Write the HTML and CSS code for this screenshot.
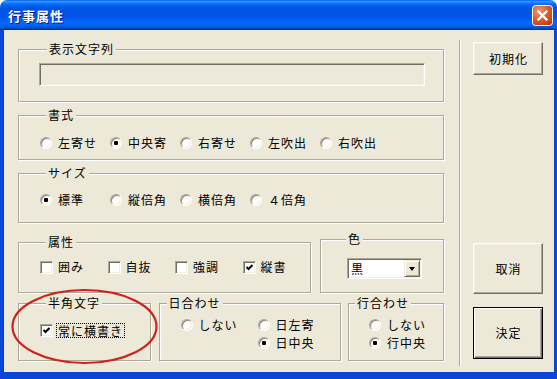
FILE: index.html
```html
<!DOCTYPE html>
<html lang="ja">
<head>
<meta charset="utf-8">
<title>行事属性</title>
<link rel="stylesheet" href="styles.css">
</head>
<body>
<div class="window">
  <div class="titlebar">
    <span class="title">行事属性</span>
    <span class="close">
      <svg width="21" height="21" viewBox="0 0 21 21">
        <defs>
          <radialGradient id="cg" cx="35%" cy="30%" r="80%">
            <stop offset="0" stop-color="#F29A74"/>
            <stop offset="0.55" stop-color="#E15A2C"/>
            <stop offset="1" stop-color="#C23A10"/>
          </radialGradient>
        </defs>
        <rect x="0.5" y="0.5" width="20" height="20" rx="3" fill="url(#cg)" stroke="#fff"/>
        <path d="M6.5 6.5 L14.5 14.5 M14.5 6.5 L6.5 14.5" stroke="#fff" stroke-width="2.2" stroke-linecap="square"/>
      </svg>
    </span>
  </div>
  <div class="client">
    <div class="left">
      <div class="group g1">
        <div class="legend l1">表示文字列</div>
        <div class="textbox"></div>
      </div>
      <div class="group g2">
        <div class="legend">書式</div>
        <div class="opts">
          <div class="opt"><span class="radio"></span>左寄せ</div>
          <div class="opt"><span class="radio on"></span>中央寄</div>
          <div class="opt"><span class="radio"></span>右寄せ</div>
          <div class="opt"><span class="radio"></span>左吹出</div>
          <div class="opt"><span class="radio"></span>右吹出</div>
        </div>
      </div>
      <div class="group g3">
        <div class="legend">サイズ</div>
        <div class="opts">
          <div class="opt"><span class="radio on"></span>標準</div>
          <div class="opt"><span class="radio"></span>縦倍角</div>
          <div class="opt"><span class="radio"></span>横倍角</div>
          <div class="opt"><span class="radio"></span>４倍角</div>
        </div>
      </div>
      <div class="row r4">
        <div class="group g4">
          <div class="legend">属性</div>
          <div class="opts">
            <div class="opt"><span class="check"></span>囲み</div>
            <div class="opt"><span class="check"></span>自抜</div>
            <div class="opt"><span class="check"></span>強調</div>
            <div class="opt"><span class="check"><svg width="11" height="11" viewBox="0 0 11 11"><polyline points="2.5,5 4.5,7 8.5,3" fill="none" stroke="#000" stroke-width="2"/></svg></span>縦書</div>
          </div>
        </div>
        <div class="group g5">
          <div class="legend l5">色</div>
          <div class="combo">
            <span class="combo-text">黒</span>
            <span class="combo-btn"><span class="arrow"></span></span>
          </div>
        </div>
      </div>
      <div class="row r5">
        <div class="group g6">
          <div class="legend">半角文字</div>
          <div class="single">
            <span class="check c6"><svg width="11" height="11" viewBox="0 0 11 11"><polyline points="2.5,5 4.5,7 8.5,3" fill="none" stroke="#000" stroke-width="2"/></svg></span>
            <span class="focus">常に横書き</span>
          </div>
        </div>
        <div class="group g7">
          <div class="legend l7">日合わせ</div>
          <div class="grid">
            <div class="opt"><span class="radio"></span>しない</div>
            <div class="opt"><span class="radio"></span>日左寄</div>
            <div class="opt"></div>
            <div class="opt"><span class="radio on"></span>日中央</div>
          </div>
        </div>
        <div class="group g8">
          <div class="legend l8">行合わせ</div>
          <div class="grid one">
            <div class="opt"><span class="radio"></span>しない</div>
            <div class="opt"><span class="radio on"></span>行中央</div>
          </div>
        </div>
      </div>
    </div>
    <div class="sep"></div>
    <div class="side">
      <button class="btn b1">初期化</button>
      <button class="btn b2">取消</button>
      <button class="btn b3 default">決定</button>
    </div>
  </div>
  <svg class="annot" width="150" height="78" viewBox="0 0 150 78">
    <ellipse cx="73.5" cy="38.5" rx="72" ry="36.5" fill="none" stroke="#D21F1F" stroke-width="2.2"/>
  </svg>
</div>
</body>
</html>
```

FILE: styles.css
```css
body {
  margin: 0;
  background: #fff;
  font-family: "Noto Sans CJK JP", "Noto Sans CJK SC", sans-serif;
  font-size: 12px;
  line-height: 14px;
  letter-spacing: 1px;
  color: #000;
}

.window {
  position: relative;
  width: 557px;
  height: 379px;
}

.titlebar {
  box-sizing: border-box;
  height: 30px;
  display: flex;
  align-items: center;
  justify-content: space-between;
  padding: 0 4px 0 8px;
  border-radius: 7px 7px 0 0;
  background: linear-gradient(to bottom,
    #0058EE 0%, #3593FF 4%, #288EFF 7%, #127DFF 10%, #036FFC 13%,
    #0262EE 18%, #0057E5 24%, #0054E3 30%, #0055EB 56%, #005BF5 66%,
    #026AFE 76%, #0062EF 86%, #0052D6 92%, #0040AB 96%, #003092 100%);
}

.title {
  color: #fff;
  font-weight: bold;
  font-size: 13px;
  letter-spacing: 1px;
  text-shadow: 1px 1px 0 #0A1A8A;
  padding-top: 2px;
}

.close {
  display: flex;
  width: 21px;
  height: 21px;
  margin-top: 1px;
}

.client {
  display: flex;
  height: 342px;
  background: #ECE9D8;
  border-style: solid;
  border-color: #0A46D8;
  border-width: 0 3px 7px 3px;
  box-shadow: inset 1px 0 0 #0B3CC0;
}

.left {
  width: 426px;
  margin-left: 15px;
  padding-top: 19px;
  display: flex;
  flex-direction: column;
}

.group {
  box-sizing: border-box;
  border: 1px solid #ACA899;
  box-shadow: inset 1px 1px 0 #fff, 1px 1px 0 #fff;
}

.legend {
  width: fit-content;
  height: 14px;
  margin: -8px 0 0 27px;
  padding: 0 2px;
  background: #ECE9D8;
  white-space: nowrap;
}

.l1 { margin-left: 28px; }
.l5 { margin-left: 25px; }
.l7 { margin-left: 7px; }
.l8 { margin-left: 6px; }

.g1 { height: 53px; }
.g2 { height: 45px; margin-top: 13px; }
.g3 { height: 50px; margin-top: 13px; }

.row {
  display: flex;
  justify-content: space-between;
  align-items: flex-end;
}

.r4 { height: 54px; margin-top: 16px; }
.r5 { height: 58px; margin-top: 10px; }

.g4 { width: 293px; height: 51px; }
.g5 { width: 124px; height: 54px; }
.g6 { width: 133px; height: 58px; }
.g7 { width: 182px; height: 58px; }
.g8 { width: 96px; height: 58px; }

.textbox {
  box-sizing: border-box;
  width: 386px;
  height: 23px;
  margin: 7px 0 0 20px;
  border: 1px solid;
  border-color: #ACA899 #fff #fff #ACA899;
  box-shadow: inset 1px 1px 0 #716F64, inset -1px -1px 0 #F1EFE2;
  background: #ECE9D8;
}

.opts {
  display: flex;
  padding-left: 21px;
}

.g2 .opts { margin-top: 14px; }
.g3 .opts { margin-top: 13px; }
.g4 .opts { margin-top: 11px; }

.opt {
  display: flex;
  align-items: center;
  height: 14px;
  white-space: nowrap;
}

.opts .opt { width: 70px; }

.radio {
  box-sizing: border-box;
  flex: none;
  position: relative;
  width: 12px;
  height: 12px;
  margin-right: 6px;
  border-radius: 50%;
  background: #fff;
  border: 1px solid;
  border-color: #ACA899 #fff #fff #ACA899;
  box-shadow: inset 1px 1px 0 #8A877A, inset -1px -1px 0 #F1EFE2;
}

.radio.on::after {
  content: "";
  position: absolute;
  left: 3px;
  top: 3px;
  width: 4px;
  height: 4px;
  border-radius: 1px;
  background: #000;
}

.check {
  box-sizing: border-box;
  flex: none;
  display: flex;
  width: 13px;
  height: 13px;
  margin-right: 5px;
  background: #fff;
  border: 1px solid;
  border-color: #ACA899 #fff #fff #ACA899;
  box-shadow: inset 1px 1px 0 #716F64, inset -1px -1px 0 #F1EFE2;
}

.check svg { display: block; }

.single {
  display: flex;
  align-items: center;
  height: 15px;
  margin-top: 13px;
  padding-left: 21px;
}

.c6 { margin-right: 3px; }

.focus {
  display: inline-block;
  line-height: 13px;
  padding: 0 1px;
  border: 1px dotted #000;
  white-space: nowrap;
}

.grid {
  display: grid;
  grid-template-columns: 77px auto;
  row-gap: 4px;
  margin-top: 8px;
  padding-left: 21px;
}

.grid.one {
  grid-template-columns: auto;
  padding-left: 20px;
}

.combo {
  box-sizing: border-box;
  display: flex;
  justify-content: space-between;
  align-items: center;
  width: 75px;
  height: 21px;
  margin: 12px 0 0 26px;
  background: #fff;
  border: 1px solid;
  border-color: #ACA899 #fff #fff #ACA899;
  box-shadow: inset 1px 1px 0 #716F64, inset -1px -1px 0 #F1EFE2;
  padding: 1px;
}

.combo-text {
  padding-left: 2px;
  line-height: 14px;
}

.combo-btn {
  box-sizing: border-box;
  display: flex;
  align-items: center;
  justify-content: center;
  width: 16px;
  height: 17px;
  background: #ECE9D8;
  border: 1px solid;
  border-color: #ECE9D8 #716F64 #716F64 #ECE9D8;
  box-shadow: inset 1px 1px 0 #fff, inset -1px -1px 0 #ACA899;
}

.arrow {
  width: 0;
  height: 0;
  border-left: 3.5px solid transparent;
  border-right: 3.5px solid transparent;
  border-top: 4px solid #000;
}

.sep {
  box-sizing: border-box;
  width: 2px;
  height: 326px;
  margin: 10px 0 0 15px;
  border-left: 1px solid #ACA899;
  border-right: 1px solid #fff;
}

.side {
  display: flex;
  flex-direction: column;
  width: 70px;
  margin-left: 12px;
}

.btn {
  box-sizing: border-box;
  width: 70px;
  padding: 0 0 0 1px;
  font: inherit;
  letter-spacing: 1px;
  color: #000;
  background: #ECE9D8;
  border: 1px solid;
  border-color: #fff #716F64 #716F64 #fff;
  box-shadow: inset -1px -1px 0 #ACA899, inset 1px 1px 0 #F1EFE2;
}

.b1 { height: 33px; margin-top: 12px; }
.b2 { height: 51px; margin-top: 168px; }
.b3 { height: 52px; margin-top: 13px; }

.btn.default {
  border: 1px solid #000;
  box-shadow: inset 1px 1px 0 #fff, inset -1px -1px 0 #716F64, inset -2px -2px 0 #ACA899;
}

.annot {
  position: absolute;
  left: 11px;
  top: 288px;
}
```
